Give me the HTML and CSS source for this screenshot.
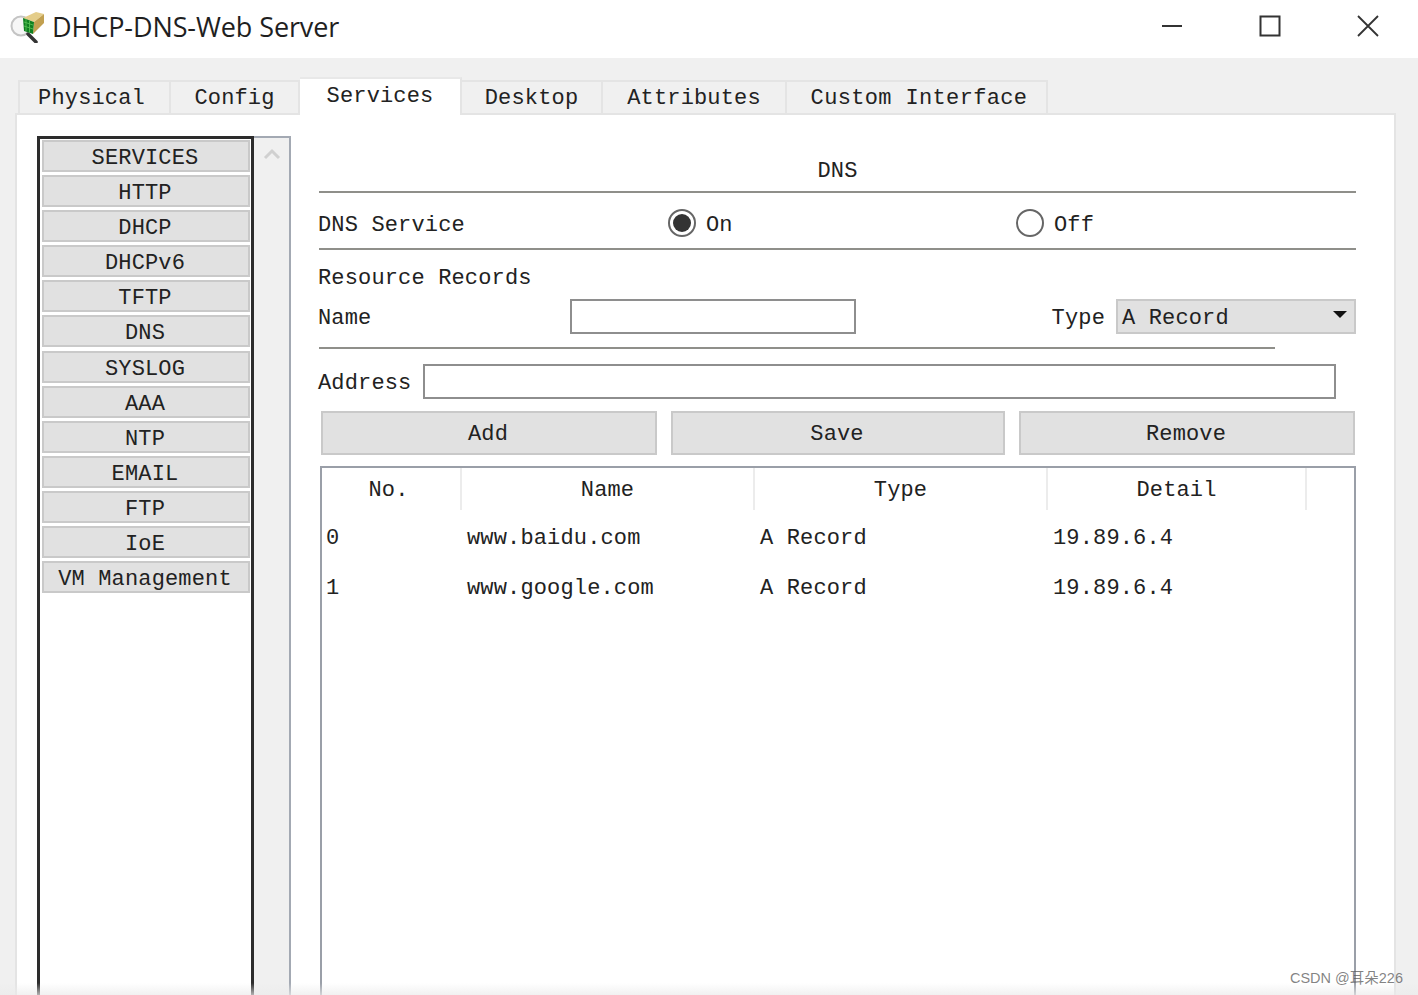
FILE: index.html
```
<!DOCTYPE html>
<html lang="en">
<head>
<meta charset="utf-8">
<title>DHCP-DNS-Web Server</title>
<link rel="stylesheet" href="styles.css">
</head>
<body>
<div class="window">
  <header class="titlebar">
    <svg class="app-icon" width="36" height="36" viewBox="0 0 36 36">
      <circle cx="11" cy="19" r="9.5" fill="#f6f6f6" stroke="#c4c4c4" stroke-width="2"/>
      <path d="M18 27l8 8" stroke="#333" stroke-width="3.5" stroke-linecap="round"/>
      <path d="M13 11L26 5l8 2-10 8z" fill="#e4cd8a"/>
      <path d="M24 15l10-8v9l-11 11z" fill="#c2a050"/>
      <path d="M13 11l11 4-1 12-9-3z" fill="#0f7f20"/>
      <path d="M16 12v12M19.500 13.500v12M14 15l9 3M14 19l9 3" stroke="#52c052" stroke-width=".9"/>
    </svg>
    <h1 class="title">DHCP-DNS-Web Server</h1>
    <div class="controls">
      <svg class="ctl" width="22" height="22" viewBox="0 0 22 22"><path d="M1 11h20" stroke="#333" stroke-width="2"/></svg>
      <svg class="ctl" width="22" height="22" viewBox="0 0 22 22"><rect x="1.500" y="1.500" width="19" height="19" fill="none" stroke="#333" stroke-width="2"/></svg>
      <svg class="ctl" width="22" height="22" viewBox="0 0 22 22"><path d="M1 1l20 20M21 1L1 21" stroke="#333" stroke-width="1.800"/></svg>
    </div>
  </header>

  <div class="body-area">
    <nav class="tabs">
      <div class="tab tab-first">Physical</div>
      <div class="tab">Config</div>
      <div class="tab active">Services</div>
      <div class="tab">Desktop</div>
      <div class="tab">Attributes</div>
      <div class="tab tab-wide">Custom Interface</div>
    </nav>

    <section class="panel">
      <aside class="side">
        <div class="side-list">
          <div class="side-btn">SERVICES</div>
          <div class="side-btn">HTTP</div>
          <div class="side-btn">DHCP</div>
          <div class="side-btn">DHCPv6</div>
          <div class="side-btn">TFTP</div>
          <div class="side-btn">DNS</div>
          <div class="side-btn">SYSLOG</div>
          <div class="side-btn">AAA</div>
          <div class="side-btn">NTP</div>
          <div class="side-btn">EMAIL</div>
          <div class="side-btn">FTP</div>
          <div class="side-btn">IoE</div>
          <div class="side-btn">VM Management</div>
        </div>
        <div class="scroll">
          <svg width="18" height="12" viewBox="0 0 18 12"><path d="M2 10l7-7 7 7" fill="none" stroke="#d0d0d0" stroke-width="3"/></svg>
        </div>
      </aside>

      <main class="content">
        <div class="heading">DNS</div>
        <div class="service-row">
          <span class="service-label">DNS Service</span>
          <label class="radio-opt"><span class="radio on"></span>On</label>
          <label class="radio-opt"><span class="radio"></span>Off</label>
        </div>
        <div class="records-title">Resource Records</div>
        <div class="name-row">
          <span class="name-label">Name</span>
          <div class="input name-input"></div>
          <span class="type-label">Type</span>
          <div class="select"><span>A Record</span><i class="caret"></i></div>
        </div>
        <div class="rule"></div>
        <div class="addr-row">
          <span class="addr-label">Address</span>
          <div class="input addr-input"></div>
        </div>
        <div class="actions">
          <div class="btn">Add</div>
          <div class="btn">Save</div>
          <div class="btn">Remove</div>
        </div>
        <div class="table-box">
          <table class="records">
            <thead>
              <tr><th class="c-no">No.</th><th class="c-name">Name</th><th class="c-type">Type</th><th class="c-detail">Detail</th><th class="c-rest"></th></tr>
            </thead>
            <tbody>
              <tr><td>0</td><td>www.baidu.com</td><td>A Record</td><td>19.89.6.4</td><td></td></tr>
              <tr><td>1</td><td>www.google.com</td><td>A Record</td><td>19.89.6.4</td><td></td></tr>
            </tbody>
          </table>
        </div>
      </main>
    </section>
  </div>

  <div class="fade"></div>
  <div class="watermark">CSDN @耳朵226</div>
</div>
</body>
</html>
```

FILE: styles.css
```
* { box-sizing: border-box; }
html, body { margin: 0; padding: 0; }
body { background: #fff; }

.window {
  position: relative;
  width: 1418px;
  height: 995px;
  overflow: hidden;
  display: flex;
  flex-direction: column;
  color: #222;
  font-family: "Liberation Mono", monospace;
  font-size: 22px;
  letter-spacing: 0.15px;
}

.titlebar {
  height: 58px;
  flex: none;
  display: flex;
  align-items: center;
  background: #fff;
  padding: 0 0 8px 10px;
}
.app-icon { margin: 0 6px 0 0; flex: none; }
.title {
  margin: 0;
  font: 400 27px "Open Sans", "Noto Sans", sans-serif;
  letter-spacing: -0.1px;
  color: #1f1f1f;
  padding-top: 2px;
}
.controls {
  margin-left: auto;
  display: flex;
  gap: 76px;
  padding: 2px 39px 0 0;
}
.ctl { display: block; }

.body-area {
  flex: 1;
  min-height: 0;
  background: #f0f0f0;
  padding: 19px 22px 0 15px;
  display: flex;
  flex-direction: column;
}

.tabs {
  display: grid;
  grid-template-columns: 153px 129px 162px 141px 184px 261px;
  justify-content: start;
  align-items: end;
  margin-left: 3px;
  height: 36px;
  flex: none;
}
.tab {
  height: 33px;
  background: #f0f0f0;
  border: 2px solid #e4e4e4;
  border-bottom: 0;
  border-left-width: 0;
  text-align: center;
  line-height: 34px;
}
.tab-first { border-left-width: 2px; padding-right: 6px; }
.tab-wide { letter-spacing: 0.35px; padding-left: 5px; }
.tab.active {
  height: 38px;
  background: #fff;
  border-left: 0;
  border-right: 2px solid #e4e4e4;
  border-top: 2px solid #e8e8e8;
  line-height: 36px;
  margin-bottom: -2px;
  position: relative;
  z-index: 1;
}

.panel {
  height: 900px;
  flex: none;
  background: #fff;
  border: 2px solid #e4e4e4;
  padding: 21px 38px 0 20px;
  display: flex;
}

.side {
  width: 254px;
  flex: none;
  display: flex;
  align-self: stretch;
}
.side-list {
  width: 217px;
  flex: none;
  border: 3px solid #2c2c2c;
  padding: 1px 1px 0 2px;
  display: flex;
  flex-direction: column;
  gap: 3.1px;
  background: #fff;
}
.side-btn {
  height: 32px;
  flex: none;
  background: #e1e1e1;
  border: 2px solid #c9c9c9;
  padding-right: 2px;
  text-align: center;
  line-height: 34px;
}
.scroll {
  flex: 1;
  background: #f0f0f0;
  border-top: 2px solid #a3a9b3;
  border-right: 2px solid #a3a9b3;
  padding: 10px 0 0 9px;
}
.scroll svg { display: block; }

.content {
  flex: 1;
  min-width: 0;
  padding-left: 28px;
}

.heading {
  height: 57px;
  text-align: center;
  line-height: 72px;
  border-bottom: 2px solid #8f8f8a;
}

.service-row {
  display: flex;
  align-items: center;
  height: 57px;
  border-bottom: 2px solid #8f8f8a;
  padding-top: 9px;
}
.service-label { width: 349px; flex: none; text-indent: -1px; }
.radio-opt {
  width: 348px;
  flex: none;
  display: flex;
  align-items: center;
  gap: 10px;
}
.radio {
  width: 28px;
  height: 28px;
  border-radius: 50%;
  border: 2px solid #666;
  background: #fff;
  flex: none;
  display: flex;
  align-items: center;
  justify-content: center;
  margin-top: -4px;
}
.radio.on::after {
  content: "";
  width: 18px;
  height: 18px;
  border-radius: 50%;
  background: #333;
}

.records-title {
  height: 27px;
  margin-top: 15px;
  line-height: 27px;
  text-indent: -1px;
}

.name-row {
  display: flex;
  align-items: center;
  height: 35px;
  margin-top: 7px;
}
.name-label { width: 251px; flex: none; padding-top: 3px; text-indent: -1px; }
.input {
  height: 35px;
  background: #fff;
  border: 2px solid #8e8e8e;
}
.name-input { width: 286px; flex: none; }
.type-label { margin-left: auto; margin-right: 11px; padding-top: 3px; }
.select {
  width: 240px;
  height: 35px;
  flex: none;
  background: #e1e1e1;
  border: 2px solid #c9c9c9;
  display: flex;
  align-items: center;
  justify-content: space-between;
  padding: 3px 7px 0 4px;
}
.caret {
  width: 0;
  height: 0;
  border-left: 7px solid transparent;
  border-right: 7px solid transparent;
  border-top: 7px solid #111;
  margin-top: -7px;
}

.rule {
  height: 2px;
  width: 956px;
  margin-top: 13px;
  background: #8f8f8a;
}

.addr-row {
  display: flex;
  align-items: center;
  margin-top: 15px;
}
.addr-label { width: 104px; flex: none; padding-top: 3px; text-indent: -1px; }
.addr-input { width: 913px; flex: none; }

.actions {
  display: grid;
  grid-template-columns: 336px 334px 336px;
  justify-content: start;
  column-gap: 14px;
  margin: 12px 0 0 2px;
}
.btn {
  height: 44px;
  background: #e1e1e1;
  border: 2px solid #c9c9c9;
  padding-right: 2px;
  text-align: center;
  line-height: 43px;
}

.table-box {
  margin: 11px 0 0 1px;
  height: 600px;
  border: 2px solid #9a9fa8;
  background: #fff;
}
.records {
  width: 100%;
  table-layout: fixed;
  border-collapse: separate;
  border-spacing: 0;
  font-size: inherit;
}
.records th {
  height: 42px;
  padding: 3px 0 0;
  font-weight: 400;
  text-align: center;
  border-right: 2px solid #ececec;
  line-height: 39px;
}
.records th.c-no { padding-right: 5px; }
.records th.c-rest { border-right: 0; }
.c-no { width: 140px; }
.c-name { width: 293px; }
.c-type { width: 293px; }
.c-detail { width: 259px; }
.records td {
  height: 50px;
  padding: 8px 0 0 5px;
  line-height: 42px;
}
.records td:first-child { padding-left: 4px; }

.fade {
  position: absolute;
  left: 0;
  right: 0;
  bottom: 0;
  height: 12px;
  background: linear-gradient(rgba(235,235,235,0), rgba(235,235,235,.7));
}
.watermark {
  position: absolute;
  right: 15px;
  bottom: 8px;
  font: 400 14.5px "Liberation Sans", "Noto Sans CJK SC", sans-serif;
  letter-spacing: 0;
  color: rgba(90,90,90,.75);
}
```
